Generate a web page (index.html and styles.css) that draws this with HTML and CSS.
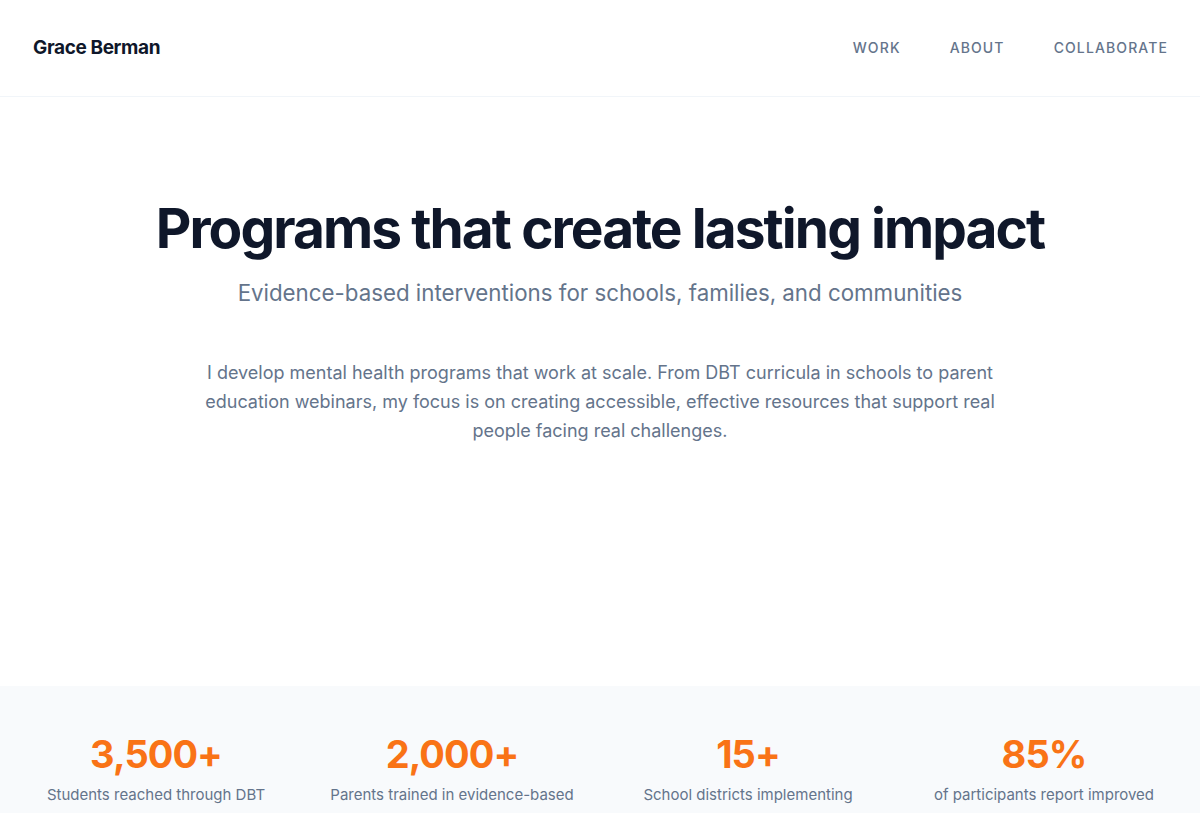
FILE: index.html
```html
<!DOCTYPE html>
<html lang="en">
<head>
<meta charset="utf-8">
<title>Grace Berman</title>
<link rel="stylesheet" href="styles.css">
</head>
<body>
<header class="site-header">
  <a class="logo" href="#">Grace Berman</a>
  <nav class="nav">
    <a href="#">WORK</a>
    <a href="#">ABOUT</a>
    <a href="#">COLLABORATE</a>
  </nav>
</header>
<main>
  <section class="hero">
    <h1>Programs that create lasting impact</h1>
    <p class="subtitle">Evidence-based interventions for schools, families, and communities</p>
    <p class="intro">I develop mental health programs that work at scale. From DBT curricula in schools to parent education webinars, my focus is on creating accessible, effective resources that support real people facing real challenges.</p>
  </section>
  <section class="stats">
    <div class="stat"><div class="num">3,500+</div><div class="label">Students reached through DBT</div></div>
    <div class="stat"><div class="num">2,000+</div><div class="label">Parents trained in evidence-based</div></div>
    <div class="stat"><div class="num">15+</div><div class="label">School districts implementing</div></div>
    <div class="stat"><div class="num">85%</div><div class="label">of participants report improved</div></div>
  </section>
</main>
</body>
</html>
```
FILE: styles.css
```css
* { box-sizing: border-box; }
html, body { margin: 0; padding: 0; }
body {
  font-family: Inter, "Liberation Sans", sans-serif;
  background: #ffffff;
  color: #0f172a;
  overflow: hidden;
}
a { text-decoration: none; color: inherit; }

.site-header {
  height: 97px;
  padding: 0 32px 1px 33px;
  display: flex;
  align-items: center;
  justify-content: space-between;
  border-bottom: 1px solid #f1f5f9;
}
.logo {
  font-weight: 700;
  font-size: 19px;
  letter-spacing: -0.02em;
  color: #0f172a;
}
.nav {
  display: flex;
  gap: 49px;
}
.nav a {
  font-size: 14px;
  font-weight: 500;
  letter-spacing: 0.08em;
  color: #64748b;
}

.hero {
  height: 589px;
  padding-top: 99px;
  text-align: center;
}
.hero h1 {
  margin: 0;
  font-size: 55px;
  line-height: 64px;
  font-weight: 700;
  letter-spacing: -0.035em;
  color: #0f172a;
}
.subtitle {
  margin: 18px 0 0;
  font-size: 22.3px;
  line-height: 30px;
  color: #64748b;
}
.intro {
  max-width: 800px;
  margin: 50px auto 0;
  font-size: 18px;
  line-height: 29px;
  color: #64748b;
}

.stats {
  background: #f8fafc;
  padding: 44px 24px 40px;
  display: grid;
  grid-template-columns: repeat(4, 1fr);
  gap: 32px;
  text-align: center;
}
.num {
  font-size: 38px;
  line-height: 48px;
  font-weight: 700;
  letter-spacing: -0.025em;
  color: #f97316;
}
.label {
  margin-top: 6px;
  font-size: 15px;
  line-height: 22px;
  color: #64748b;
}
```
